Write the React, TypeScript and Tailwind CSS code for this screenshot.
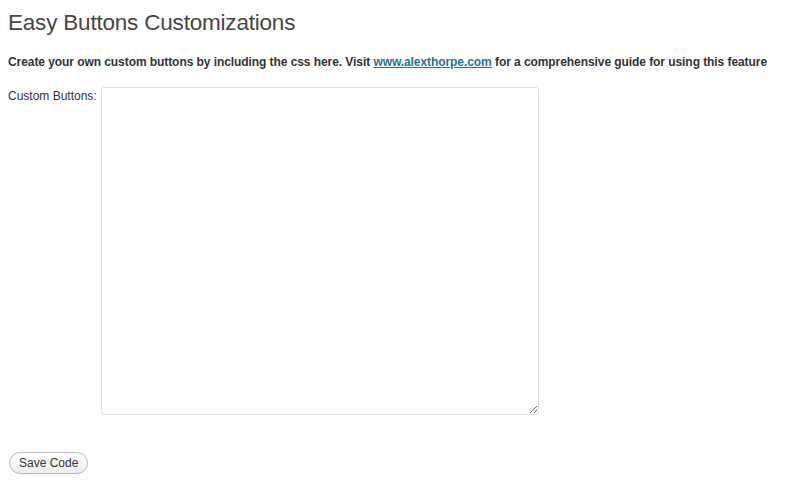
import React from "react";

export default function App() {
  return (
    <div className="w-[785px] h-[486px] bg-white px-[8px] pt-[8px]" style={{ fontFamily: '"Liberation Sans", Arial, sans-serif' }}>
      <h2 className="text-[22.5px] leading-[29px] tracking-[-0.2px] text-[#464646] font-light">Easy Buttons Customizations</h2>
      <p className="mt-[17px] text-[12px] leading-[16px] font-bold tracking-[-0.07px] text-[#333]">
        Create your own custom buttons by including the css here. Visit{" "}
        <a href="#" className="text-[#21759b] underline">www.alexthorpe.com</a> for a comprehensive guide for using this feature
      </p>
      <div className="mt-[17px] flex items-start">
        <label className="w-[93px] pt-[1px] text-[12px] leading-[16px] text-[#333]">Custom Buttons:</label>
        <textarea className="w-[438px] h-[328px] border border-[#dfdfdf] rounded-[3px] bg-white resize-y outline-none" />
      </div>
      <button className="mt-[37px] ml-[1px] h-[22px] px-[9px] rounded-full border border-[#bbb] bg-gradient-to-b from-white to-[#ededed] text-[12px] text-[#333]">
        Save Code
      </button>
    </div>
  );
}
